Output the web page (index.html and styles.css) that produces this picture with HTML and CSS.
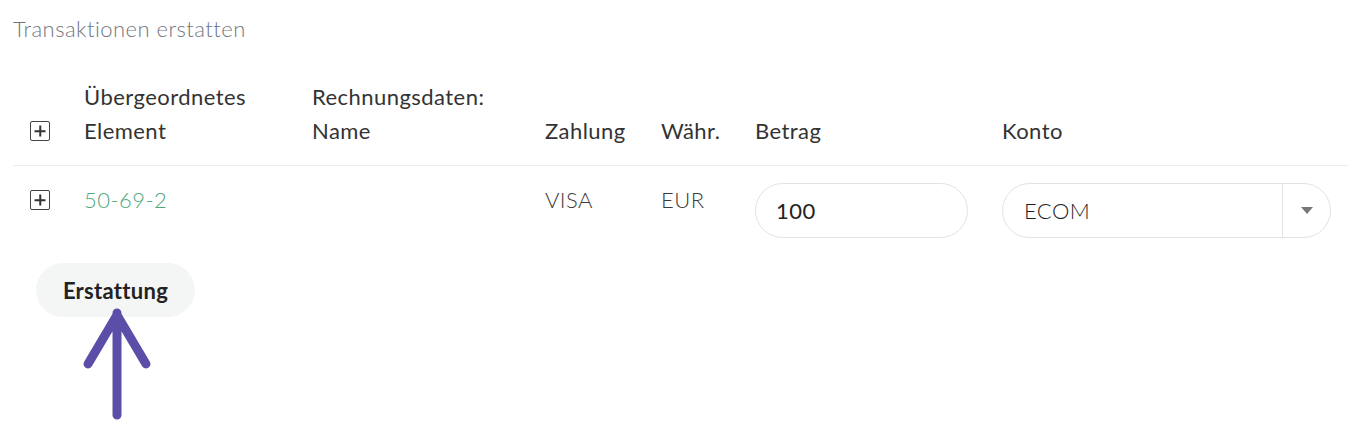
FILE: index.html
```html
<!DOCTYPE html>
<html lang="de">
<head>
<meta charset="utf-8">
<title>Transaktionen erstatten</title>
<link rel="stylesheet" href="styles.css">
</head>
<body>
<div class="page">
  <h1 class="title">Transaktionen erstatten</h1>
  <div class="table">
    <div class="row head">
      <div class="cell icon-cell"><span class="plus"></span></div>
      <div class="cell">Übergeordnetes<br>Element</div>
      <div class="cell">Rechnungsdaten:<br>Name</div>
      <div class="cell">Zahlung</div>
      <div class="cell">Währ.</div>
      <div class="cell">Betrag</div>
      <div class="cell">Konto</div>
    </div>
    <div class="row body">
      <div class="cell icon-cell"><span class="plus"></span></div>
      <div class="cell link">50-69-2</div>
      <div class="cell"></div>
      <div class="cell muted">VISA</div>
      <div class="cell muted">EUR</div>
      <div class="cell"><div class="input">100</div></div>
      <div class="cell"><div class="select"><span class="select-value">ECOM</span><span class="select-arrow"><span class="caret"></span></span></div></div>
    </div>
  </div>
  <div class="actions">
    <button class="btn">Erstattung</button>
    <svg class="pointer" width="80" height="115" viewBox="0 0 80 115">
      <path d="M40 6 L40 108 M11 57 L40 8 L69 57" fill="none" stroke="#5a4ea8" stroke-width="9" stroke-linecap="round" stroke-linejoin="round"/>
    </svg>
  </div>
</div>
</body>
</html>
```
FILE: styles.css
```css
* { box-sizing: border-box; }
body {
  margin: 0;
  background: #fff;
  font-family: "Lato", "Open Sans", sans-serif;
  font-size: 22px;
  letter-spacing: 0.45px;
  color: #333;
}
.page {
  padding: 13px 18px 0 13px;
}
.title {
  margin: 0;
  font-size: 22px;
  font-weight: 300;
  line-height: 32px;
  letter-spacing: 0.45px;
  color: #6f7680;
}
.table {
  margin-top: 35px;
}
.row {
  display: grid;
  grid-template-columns: 54px 228px 233px 116px 94px 247px 1fr;
  padding-left: 17px;
  line-height: 34px;
}
.head {
  align-items: end;
  padding-bottom: 17px;
  border-bottom: 1px solid #ececec;
  color: #333;
}
.body {
  align-items: start;
  padding-top: 17px;
}
.icon-cell {
  display: flex;
  align-items: center;
  height: 34px;
}
.plus {
  position: relative;
  display: block;
  width: 20px;
  height: 20px;
  border: 1.5px solid #444;
  border-radius: 2px;
}
.plus::before, .plus::after {
  content: "";
  position: absolute;
  background: #333;
  left: 50%;
  top: 50%;
  transform: translate(-50%, -50%);
}
.plus::before { width: 11px; height: 1.5px; }
.plus::after { width: 1.5px; height: 11px; }
.link { color: #4fa77a; font-weight: 300; }
.muted { color: #3c3c3c; font-weight: 300; }
.input {
  width: 213px;
  height: 55px;
  border: 1px solid #e2e2e2;
  border-radius: 28px;
  padding-left: 20px;
  display: flex;
  align-items: center;
  color: #222;
}
.select {
  width: 329px;
  height: 55px;
  border: 1px solid #e2e2e2;
  border-radius: 28px;
  display: flex;
  align-items: center;
  color: #333;
}
.select-value {
  flex: 1;
  padding-left: 21px;
  font-weight: 300;
  color: #1e1e1e;
}
.select-arrow {
  width: 48px;
  height: 100%;
  border-left: 1px solid #e2e2e2;
  display: flex;
  align-items: center;
  justify-content: center;
}
.caret {
  width: 0;
  height: 0;
  border-left: 6px solid transparent;
  border-right: 6px solid transparent;
  border-top: 7px solid #777;
}
.actions {
  margin-top: 25px;
  padding-left: 23px;
  display: flex;
  flex-direction: column;
  align-items: flex-start;
}
.btn {
  font-family: inherit;
  font-size: 22px;
  font-weight: 700;
  letter-spacing: 0.3px;
  color: #222;
  background: #f4f6f6;
  border: none;
  border-radius: 27px;
  width: 159px;
  height: 54px;
  padding: 0;
}
.pointer {
  display: block;
  margin-top: -10px;
  margin-left: 41px;
}
```
